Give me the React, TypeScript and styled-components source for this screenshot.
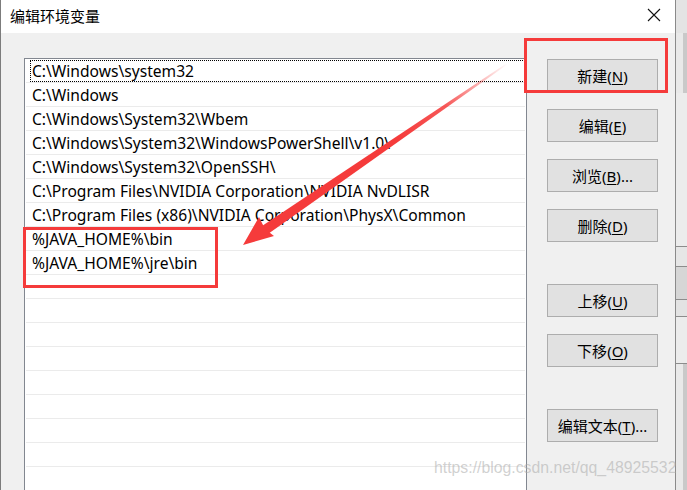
import React from 'react';
import styled, { createGlobalStyle } from 'styled-components';

const GlobalStyle = createGlobalStyle`
  html, body {
    margin: 0;
    padding: 0;
    background: #f0f0f0;
    overflow: hidden;
  }
`;

const paths = [
  'C:\\Windows\\system32',
  'C:\\Windows',
  'C:\\Windows\\System32\\Wbem',
  'C:\\Windows\\System32\\WindowsPowerShell\\v1.0\\',
  'C:\\Windows\\System32\\OpenSSH\\',
  'C:\\Program Files\\NVIDIA Corporation\\NVIDIA NvDLISR',
  'C:\\Program Files (x86)\\NVIDIA Corporation\\PhysX\\Common',
  '%JAVA_HOME%\\bin',
  '%JAVA_HOME%\\jre\\bin',
];

const EMPTY_ROWS = 9;

interface ActionDef {
  label: string;
  key: string;
  suffix?: string;
  gap: number;
}

const actions: ActionDef[] = [
  { label: '新建', key: 'N', gap: 1 },
  { label: '编辑', key: 'E', gap: 17 },
  { label: '浏览', key: 'B', suffix: '...', gap: 17 },
  { label: '删除', key: 'D', gap: 17 },
  { label: '上移', key: 'U', gap: 42 },
  { label: '下移', key: 'O', gap: 17 },
  { label: '编辑文本', key: 'T', suffix: '...', gap: 42 },
];

const App: React.FC = () => {
  return (
    <>
      <GlobalStyle />
      <Screen>
        <LeftEdge />
        <Dialog>
          <TitleBar>
            <Title>编辑环境变量</Title>
            <CloseBtn>
              <svg width="14" height="14" viewBox="0 0 14 14">
                <path d="M1 1 L13 13 M13 1 L1 13" stroke="#111" strokeWidth="1.1" fill="none" />
              </svg>
            </CloseBtn>
          </TitleBar>
          <Body>
            <ListBox>
              {paths.map((p, i) => (
                <Row key={p} $focused={i === 0}>
                  {p}
                </Row>
              ))}
              {Array.from({ length: EMPTY_ROWS }).map((_, i) => (
                <Row key={`e${i}`} />
              ))}
            </ListBox>
            <ButtonColumn>
              {actions.map((a) => (
                <ActionButton key={a.key} $gap={a.gap}>
                  {a.label}(<u>{a.key}</u>){a.suffix}
                </ActionButton>
              ))}
            </ButtonColumn>
          </Body>
        </Dialog>
        <BackWindow>
          <BackBand $h={33} $bg="#e4e4e4" />
          <BackBand $h={60} $bg="#e9e9e9" $scroll />
          <BackBand $h={153} $bg="#ececec" />
          <BackBand $h={19} $bg="#e6e6e6" $line />
          <BackBand $h={32} $bg="#d6d6d6" $line />
          <BackBand $h={16} $bg="#e3e3e3" $line />
          <BackBand $h={46} $bg="#ececec" $line />
          <BackBand $h={131} $bg="#e9e9e9" $line $scroll />
        </BackWindow>

        <Arrow width="687" height="490" viewBox="0 0 687 490">
          <defs>
            <linearGradient id="fade" x1="507" y1="63" x2="262" y2="232" gradientUnits="userSpaceOnUse">
              <stop offset="0" stopColor="#f53b3b" stopOpacity="0" />
              <stop offset="0.25" stopColor="#f53b3b" stopOpacity="0.85" />
              <stop offset="0.45" stopColor="#f53b3b" stopOpacity="1" />
              <stop offset="1" stopColor="#f53b3b" stopOpacity="1" />
            </linearGradient>
          </defs>
          <polygon points="507,63 508,64 268,234 262,226" fill="url(#fade)" />
          <polygon points="243,245 259,217 265,229 274,236" fill="#f53b3b" />
        </Arrow>
        <RedBox $x={524} $y={38} $w={144} $h={55} />
        <RedBox $x={23} $y={227} $w={195} $h={61} />
        <Watermark>https://blog.csdn.net/qq_48925532</Watermark>
      </Screen>
    </>
  );
};

export default App;

const Screen = styled.div`
  position: relative;
  display: flex;
  width: 687px;
  height: 490px;
  overflow: hidden;
  font-family: 'Noto Sans', 'Noto Sans CJK SC', sans-serif;
`;

const LeftEdge = styled.div`
  width: 1px;
  background: #7c7c7c;
`;

const Dialog = styled.div`
  width: 674px;
  display: flex;
  flex-direction: column;
  background: #f0f0f0;
  border-right: 1px solid #8a8a8a;
`;

const TitleBar = styled.div`
  height: 33px;
  flex-shrink: 0;
  background: #fff;
  display: flex;
  align-items: center;
  justify-content: space-between;
  padding: 0 14px 0 9px;
`;

const Title = styled.span`
  font-family: 'Noto Sans CJK SC', sans-serif;
  font-size: 15px;
  color: #000;
  margin-top: -3px;
`;

const CloseBtn = styled.div`
  display: flex;
  align-items: center;
  margin-top: -4px;
`;

const Body = styled.div`
  flex: 1;
  display: flex;
  gap: 20px;
  padding: 25px 0 0 23px;
  overflow: hidden;
`;

const ListBox = styled.div`
  width: 503px;
  height: 460px;
  box-sizing: border-box;
  flex-shrink: 0;
  border: 1px solid #828790;
  background: #fff;
  display: flex;
  flex-direction: column;
`;

const Row = styled.div<{ $focused?: boolean }>`
  position: relative;
  height: 24px;
  flex-shrink: 0;
  box-sizing: border-box;
  margin: 0 1px;
  border-bottom: 1px solid #ebebeb;
  padding-left: 6px;
  display: flex;
  align-items: center;
  font-size: 15.6px;
  color: #000;
  white-space: nowrap;

  &::before {
    content: '';
    display: ${({ $focused }) => ($focused ? 'block' : 'none')};
    position: absolute;
    left: 4px;
    right: 0;
    top: 1px;
    bottom: 0;
    border: 1px dotted #000;
  }
`;

const ButtonColumn = styled.div`
  width: 111px;
  display: flex;
  flex-direction: column;
`;

const ActionButton = styled.div<{ $gap: number }>`
  margin-top: ${({ $gap }) => $gap}px;
  height: 33px;
  box-sizing: border-box;
  border: 1px solid #adadad;
  background: #e1e1e1;
  display: flex;
  align-items: center;
  justify-content: center;
  font-family: 'Noto Sans', 'Noto Sans CJK SC', sans-serif;
  font-size: 15px;
  color: #000;
  white-space: nowrap;

  u {
    text-decoration-thickness: 1px;
    text-underline-offset: 2px;
  }
`;

const BackWindow = styled.div`
  flex: 1;
  display: flex;
  flex-direction: column;
  background: #e9e9e9;
`;

const BackBand = styled.div<{ $h: number; $bg: string; $line?: boolean; $scroll?: boolean }>`
  height: ${({ $h }) => $h}px;
  flex-shrink: 0;
  background: ${({ $bg }) => $bg};
  border-top: ${({ $line }) => ($line ? '1px solid #8c8c8c' : 'none')};
  box-shadow: ${({ $scroll }) => ($scroll ? 'inset -4px 0 0 #c9c9c9' : 'none')};
`;

const Arrow = styled.svg`
  position: absolute;
  left: 0;
  top: 0;
  pointer-events: none;
`;

const RedBox = styled.div<{ $x: number; $y: number; $w: number; $h: number }>`
  position: absolute;
  left: ${({ $x }) => $x}px;
  top: ${({ $y }) => $y}px;
  width: ${({ $w }) => $w}px;
  height: ${({ $h }) => $h}px;
  box-sizing: border-box;
  border: 3px solid #f53b3b;
  pointer-events: none;
`;

const Watermark = styled.div`
  position: absolute;
  left: 434px;
  top: 459px;
  font-family: 'Liberation Sans', Arial, sans-serif;
  font-size: 15.8px;
  color: rgba(170, 170, 170, 0.55);
  white-space: nowrap;
  pointer-events: none;
`;
